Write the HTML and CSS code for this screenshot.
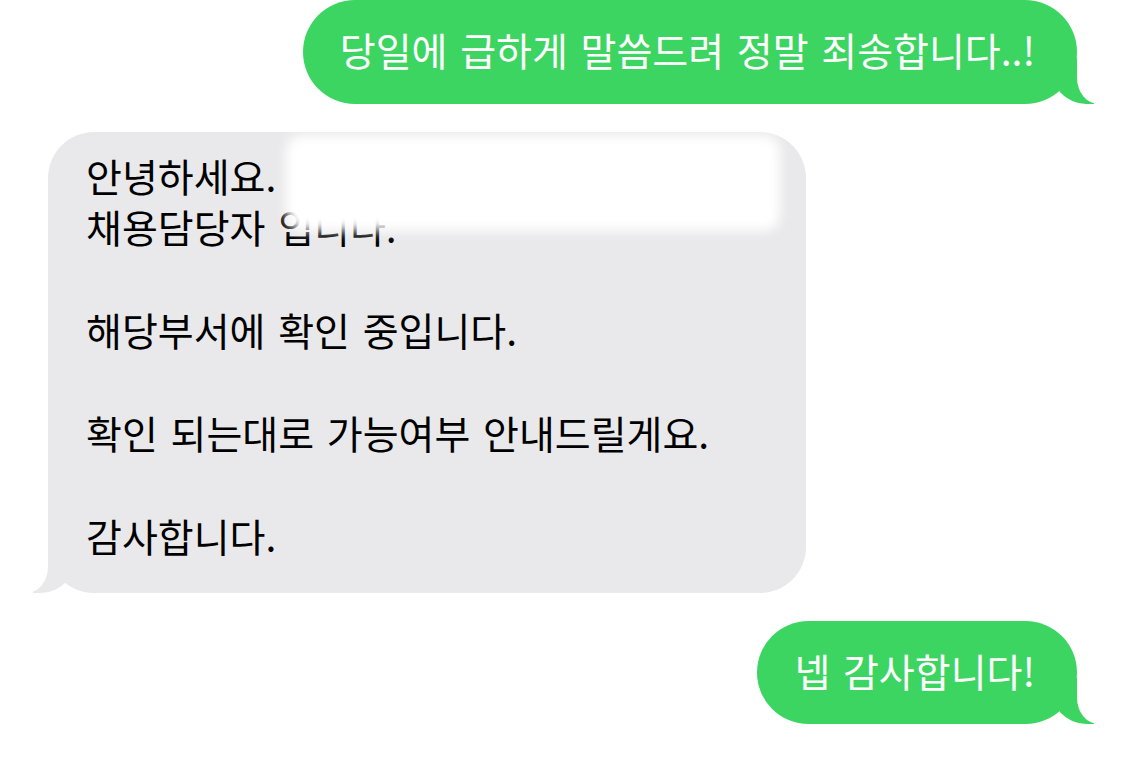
FILE: index.html
```
<!DOCTYPE html>
<html>
<head>
  <title>Messages</title>
  <meta charset="UTF-8">
  <link rel="stylesheet" href="styles.css">
</head>
<body>
  <div class="thread">
    <div class="bubble sent">
      <span class="text">당일에 급하게 말씀드려 정말 죄송합니다..!</span>
    </div>

    <div class="bubble received">
      <div class="text">
        <p>안녕하세요.<br>채용담당자 입니다.</p>
        <p>해당부서에 확인 중입니다.</p>
        <p>확인 되는대로 가능여부 안내드릴게요.</p>
        <p>감사합니다.</p>
      </div>
      <div class="redact"></div>
    </div>

    <div class="bubble sent short">
      <span class="text">넵 감사합니다!</span>
    </div>
  </div>
</body>
</html>
```

FILE: styles.css
```
body {
  margin: 0;
  background: #fff;
  font-family: "Noto Sans CJK KR", "Noto Sans", sans-serif;
}
.thread {
  display: flex;
  flex-direction: column;
  gap: 28px;
  padding-top: 0;
}
.bubble {
  position: relative;
  font-size: 39px;
  line-height: 51.5px;
  word-spacing: 4px;
  border-radius: 52px;
}
.bubble .text {
  position: relative;
  z-index: 2;
}
.sent {
  align-self: flex-end;
  margin-right: 47px;
  background: #3dd562;
  color: #fff;
  padding: 24px 42px 28px 37px;
}
.sent::before {
  content: "";
  position: absolute;
  z-index: 0;
  bottom: 0;
  right: -17px;
  width: 44px;
  height: 46px;
  background: #3dd562;
  border-bottom-left-radius: 36px 38px;
}
.sent::after {
  content: "";
  position: absolute;
  z-index: 1;
  bottom: 0;
  right: -24px;
  width: 24px;
  height: 48px;
  background: #fff;
  border-bottom-left-radius: 22px 26px;
}
.received {
  align-self: flex-start;
  margin-left: 48px;
  width: 758px;
  box-sizing: border-box;
  background: #e9e9eb;
  color: #000;
  padding: 18px 40px 31px 38px;
  border-radius: 46px;
}
.received p {
  margin: 0 0 51.5px;
}
.received p:last-child {
  margin-bottom: 0;
}
.received::before {
  content: "";
  position: absolute;
  z-index: 0;
  bottom: 0;
  left: -15px;
  width: 44px;
  height: 46px;
  background: #e9e9eb;
  border-bottom-right-radius: 36px 38px;
}
.received::after {
  content: "";
  position: absolute;
  z-index: 1;
  bottom: 0;
  left: -24px;
  width: 24px;
  height: 48px;
  background: #fff;
  border-bottom-right-radius: 22px 26px;
}
.redact {
  position: absolute;
  z-index: 3;
  top: 3px;
  left: 238px;
  width: 494px;
  height: 96px;
  background: #fff;
  border-radius: 16px;
  filter: blur(6px);
}
```
